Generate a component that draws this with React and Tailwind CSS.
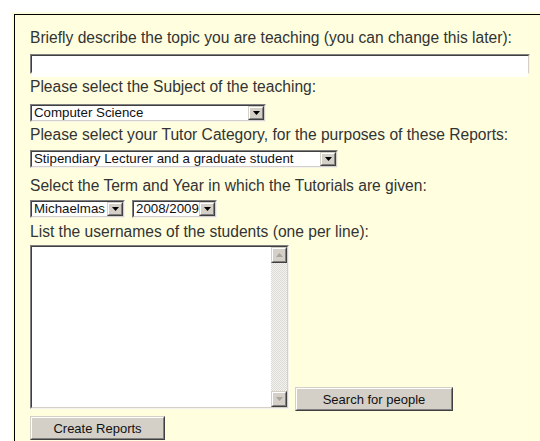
import { useState } from 'react'

// classic sunken field: dark edges top/left, light edges bottom/right
function Sunken({ className = '', children }) {
  return (
    <div className={`border border-t-[#808080] border-l-[#808080] border-r-[#f4f2ec] border-b-[#f4f2ec] ${className}`}>
      <div className="h-full border border-t-[#404040] border-l-[#404040] border-r-[#d4d0c8] border-b-[#d4d0c8] bg-white">
        {children}
      </div>
    </div>
  )
}

function Raised({ className = '', children }) {
  return (
    <div className={`border border-t-[#d4d0c8] border-l-[#d4d0c8] border-r-[#404040] border-b-[#404040] bg-[#d4d0c8] ${className}`}>
      <div className="h-full border border-t-white border-l-white border-r-[#808080] border-b-[#808080] flex items-center justify-center">
        {children}
      </div>
    </div>
  )
}

function Arrow({ up = false, disabled = false }) {
  return (
    <svg width="7" height="4" viewBox="0 0 7 4" className={up ? 'rotate-180' : ''}>
      <path d="M0 0h7L3.5 4z" fill={disabled ? '#a8a6a0' : '#000'} />
    </svg>
  )
}

function Select({ width, value }) {
  return (
    <Sunken className={`${width} h-[18px]`}>
      <div className="flex h-full">
        <div className="flex-1 pl-[2px] text-[13.3px] leading-[14px] text-[#111] whitespace-nowrap overflow-hidden">{value}</div>
        <Raised className="w-[16px] h-full">
          <Arrow />
        </Raised>
      </div>
    </Sunken>
  )
}

function Button({ width, label }) {
  return (
    <Raised className={`${width} h-[24px]`}>
      <span className="text-[13px] leading-none text-[#111]">{label}</span>
    </Raised>
  )
}

const label = 'text-[15.6px] leading-[19px] text-[#333] whitespace-nowrap'

export default function App() {
  const [topic, setTopic] = useState('')

  return (
    <div className="h-[441px] overflow-hidden bg-white pt-3 pl-3" style={{ fontFamily: '"Liberation Sans", Arial, sans-serif' }}>
      <div className="bg-[#ffffe0] pt-[2px] pl-[2px] h-[460px]">
        <div className="h-full border-t border-l border-black pl-[15px] pt-[13px] flex flex-col items-start">
          <div className={label}>Briefly describe the topic you are teaching (you can change this later):</div>
          <Sunken className="mt-[7px] w-[500px] h-[20px]">
            <input
              value={topic}
              onChange={(e) => setTopic(e.target.value)}
              className="w-full h-full px-1 text-[13px] outline-none bg-white"
            />
          </Sunken>

          <div className={`${label} mt-[3px]`}>Please select the Subject of the teaching:</div>
          <div className="mt-[8px]">
            <Select width="w-[236px]" value="Computer Science" />
          </div>

          <div className={`${label} mt-[3px]`}>Please select your Tutor Category, for the purposes of these Reports:</div>
          <div className="mt-[6px]">
            <Select width="w-[308px]" value="Stipendiary Lecturer and a graduate student" />
          </div>

          <div className={`${label} mt-[8px]`}>Select the Term and Year in which the Tutorials are given:</div>
          <div className="mt-[5px] flex gap-[7px]">
            <Select width="w-[95px]" value="Michaelmas" />
            <Select width="w-[85px]" value="2008/2009" />
          </div>

          <div className={`${label} mt-[4px]`}>List the usernames of the students (one per line):</div>
          <div className="mt-[4px] flex items-end gap-[6px]">
            <Sunken className="w-[259px] h-[164px]">
              <div className="flex h-full">
                <div className="flex-1" />
                <div className="w-[16px] flex flex-col bg-[#ebe9e4]">
                  <Raised className="w-[16px] h-[16px]">
                    <Arrow up disabled />
                  </Raised>
                  <div className="flex-1 bg-[repeating-conic-gradient(#f4f3ef_0_25%,#dcdad4_0_50%)] bg-[length:2px_2px]" />
                  <Raised className="w-[16px] h-[16px]">
                    <Arrow disabled />
                  </Raised>
                </div>
              </div>
            </Sunken>
            <div className="mb-[-2px]">
              <Button width="w-[158px]" label="Search for people" />
            </div>
          </div>

          <div className="mt-[7px]">
            <Button width="w-[135px]" label="Create Reports" />
          </div>
        </div>
      </div>
    </div>
  )
}
